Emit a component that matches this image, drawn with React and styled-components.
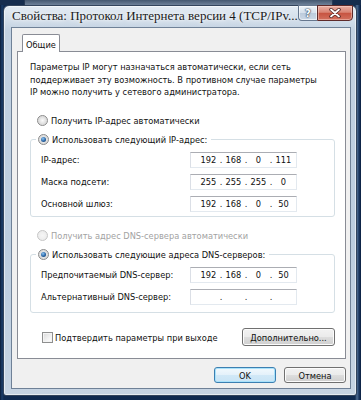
import React from 'react'
import styled, { createGlobalStyle } from 'styled-components'

const UI_FONT = `"DejaVu Sans Condensed", "DejaVu Sans", "Liberation Sans", sans-serif`

const GlobalStyle = createGlobalStyle`
  html, body {
    margin: 0;
    padding: 0;
    background: #0d2547;
  }
  * {
    box-sizing: border-box;
  }
`

const Desktop = styled.div`
  width: 361px;
  height: 400px;
  overflow: hidden;
  display: flex;
  flex-direction: column;
  background: linear-gradient(90deg, #0a1c38 0, #1b3d69 2px, #0f2a50 4px, #0f2a50 355px, #4f6d92 357px, #1b3862 359px, #0a1e3e 361px);
`

const BehindStrip = styled.div`
  height: 5px;
  flex-shrink: 0;
  display: flex;
  padding: 0 28px 0 24px;
  background: #162d4e;
`

const BehindWindow = styled.div`
  flex: 1;
  background: linear-gradient(180deg, #44576f, #6e8199);
  border-left: 1px solid #273a55;
  border-right: 1px solid #273a55;
`

const Window = styled.div`
  height: 391px;
  flex-shrink: 0;
  margin: 0 4px 0 3px;
  display: flex;
  flex-direction: column;
  padding: 0 5px 6px 7px;
  border: 1px solid #33445c;
  border-radius: 6px 6px 3px 3px;
  background: linear-gradient(180deg, #e3ebf3 0, #d2deea 14px, #c3d2e2 24px, #bccddf 60%, #c6d4e3 100%);
  box-shadow: inset 0 0 0 1px rgba(255, 255, 255, 0.55);
`

const TitleBar = styled.div`
  height: 21px;
  flex-shrink: 0;
  display: flex;
  align-items: flex-start;
  justify-content: space-between;
`

const Title = styled.div`
  padding-left: 1px;
  font-family: "Liberation Serif", serif;
  font-size: 13px;
  line-height: 20px;
  color: #1a1a1a;
  white-space: nowrap;
  text-shadow: 0 0 6px rgba(255, 255, 255, 0.95), 0 0 3px rgba(255, 255, 255, 0.9);
`

const CaptionButtons = styled.div`
  display: flex;
  margin: -1px -2px 0 0;
  height: 16px;
`

const HelpButton = styled.div`
  width: 19px;
  height: 16px;
  display: flex;
  align-items: center;
  justify-content: center;
  border: 1px solid #66778e;
  border-right: none;
  border-radius: 0 0 0 4px;
  background: linear-gradient(180deg, #eef3f8 0%, #d6e1ec 48%, #bccbdc 52%, #cbd8e6 100%);
  box-shadow: inset 0 0 0 1px rgba(255, 255, 255, 0.6);
  font-family: "DejaVu Sans", sans-serif;
  font-weight: bold;
  font-size: 10px;
  color: #fff;
  text-shadow: 0 0 1px #3c4d63, 0 0 1px #3c4d63, 0 0 2px #3c4d63;
`

const CloseButton = styled.div`
  width: 36px;
  height: 16px;
  display: flex;
  align-items: center;
  justify-content: center;
  border: 1px solid #5e2a2a;
  border-radius: 0 0 4px 0;
  background: linear-gradient(180deg, #eab0a4 0%, #d98373 45%, #c75441 52%, #d2705e 100%);
  box-shadow: inset 0 0 0 1px rgba(255, 220, 210, 0.45);
`

const Client = styled.div`
  flex: 1;
  display: flex;
  flex-direction: column;
  padding: 6px 4px 5px 5px;
  background: #f0f0f0;
  border: 1px solid #6f8197;
  font-family: ${UI_FONT};
  font-stretch: condensed;
  font-size: 9.2px;
  color: #111;
`

const Tabs = styled.div`
  display: flex;
  padding-left: 5px;
  height: 18px;
  flex-shrink: 0;
`

const Tab = styled.div`
  position: relative;
  z-index: 1;
  width: 38px;
  height: 18px;
  padding: 4px 0 0 3px;
  background: #fff;
  border: 1px solid #898c95;
  border-bottom: none;
  border-radius: 2px 2px 0 0;
`

const Panel = styled.div`
  flex: 1;
  margin-top: -1px;
  display: flex;
  flex-direction: column;
  padding: 9px 10px 12px 12px;
  background: #fff;
  border: 1px solid #898c95;
`

const Intro = styled.p`
  margin: 0;
  line-height: 12.5px;
`

const OptionRow = styled.div`
  display: flex;
  align-items: center;
  gap: 3px;
  height: 14px;
  margin-top: ${({ $top }) => $top}px;
  padding-left: 7px;
  color: ${({ $disabled }) => ($disabled ? '#a2a2a2' : 'inherit')};
  white-space: nowrap;
`

const RadioCircle = styled.span`
  position: relative;
  width: 11px;
  height: 11px;
  flex-shrink: 0;
  border-radius: 50%;
  border: 1px solid ${({ $disabled }) => ($disabled ? '#c6c6c6' : '#8a8a8a')};
  background: ${({ $disabled }) =>
    $disabled
      ? 'radial-gradient(circle at 50% 50%, #f6f6f6 0, #ececec 70%, #f4f4f4 100%)'
      : 'radial-gradient(circle at 50% 50%, #fafafa 0, #dcdcdc 60%, #f0f0f0 100%)'};

  &::after {
    content: '';
    display: ${({ $checked }) => ($checked ? 'block' : 'none')};
    position: absolute;
    left: 2px;
    top: 2px;
    width: 5px;
    height: 5px;
    border-radius: 50%;
    background: radial-gradient(circle at 40% 35%, #8cc4f2 0, #2a66a6 55%, #0e2f58 100%);
  }
`

const CheckBox = styled.span`
  width: 11px;
  height: 11px;
  flex-shrink: 0;
  border: 1px solid #8e8f8f;
  background: linear-gradient(135deg, #d9d9d9 0%, #f2f2f2 60%, #ffffff 100%);
  box-shadow: inset 0 0 0 1px #f4f4f4;
`

const Group = styled.fieldset`
  margin: 5px 0 0;
  padding: 0;
  min-width: 0;
  border: 1px solid #d5dfe5;
  border-radius: 3px;
`

const Legend = styled.legend`
  display: flex;
  align-items: center;
  gap: 3px;
  height: 14px;
  margin-left: 5px;
  padding: 0 4px 0 2px;
  white-space: nowrap;
`

const GroupBody = styled.div`
  display: flex;
  flex-direction: column;
  gap: 6px;
  padding: 5px 0 ${({ $bottom }) => $bottom}px 10px;
`

const FieldRow = styled.div`
  display: grid;
  grid-template-columns: 149px 107px;
  align-items: center;
  height: 16px;
`

const IpBox = styled.div`
  height: 16px;
  display: flex;
  align-items: center;
  padding-left: 7px;
  background: #fff;
  border: 1px solid #abadb3;
  border-left-color: #dbdfe6;
  border-right-color: #e3e9ef;
  border-bottom-color: #e3e9ef;
`

const Octet = styled.span`
  min-width: 21px;
  text-align: center;
`

const Dot = styled.span`
  width: 4px;
  text-align: center;
`

const BottomRow = styled.div`
  margin-top: auto;
  display: flex;
  align-items: center;
  justify-content: space-between;
`

const CheckRow = styled.label`
  display: flex;
  align-items: center;
  gap: 2px;
  padding-left: 12px;
  white-space: nowrap;
`

const Button = styled.button`
  width: ${({ $w }) => $w}px;
  height: ${({ $h }) => $h}px;
  padding: 0;
  font: inherit;
  font-stretch: condensed;
  color: #111;
  border-radius: 3px;
  border: 1px solid ${({ $default }) => ($default ? '#3c7fb1' : '#707070')};
  background: ${({ $default }) =>
    $default
      ? 'linear-gradient(180deg, #f2f9fd 0%, #e4f1fa 48%, #d1e8f7 52%, #c9e4f5 100%)'
      : 'linear-gradient(180deg, #f2f2f2 0%, #ebebeb 48%, #dddddd 52%, #cfcfcf 100%)'};
  box-shadow: inset 0 0 0 1px ${({ $default }) => ($default ? '#a8e2fb' : '#fcfcfc')};
`

const Footer = styled.div`
  display: flex;
  justify-content: flex-end;
  gap: 8px;
  margin-top: 8px;
  flex-shrink: 0;
`

function IpField({ octets }) {
  return (
    <IpBox>
      {octets.map((o, i) => (
        <React.Fragment key={i}>
          {i > 0 && <Dot>.</Dot>}
          <Octet>{o}</Octet>
        </React.Fragment>
      ))}
    </IpBox>
  )
}

const ipRows = [
  { label: 'IP-адрес:', value: ['192', '168', '0', '111'] },
  { label: 'Маска подсети:', value: ['255', '255', '255', '0'] },
  { label: 'Основной шлюз:', value: ['192', '168', '0', '50'] },
]

const dnsRows = [
  { label: 'Предпочитаемый DNS-сервер:', value: ['192', '168', '0', '50'] },
  { label: 'Альтернативный DNS-сервер:', value: ['', '', '', ''] },
]

export default function App() {
  return (
    <>
      <GlobalStyle />
      <Desktop>
        <BehindStrip>
          <BehindWindow />
        </BehindStrip>
        <Window>
          <TitleBar>
            <Title>Свойства: Протокол Интернета версии 4 (TCP/IPv...</Title>
            <CaptionButtons>
              <HelpButton>?</HelpButton>
              <CloseButton>
                <svg width="12" height="10" viewBox="0 0 12 10">
                  <path d="M2 1.5 L10 8.5 M10 1.5 L2 8.5" stroke="#4a2020" strokeWidth="3.4" strokeLinecap="round" />
                  <path d="M2 1.5 L10 8.5 M10 1.5 L2 8.5" stroke="#ffffff" strokeWidth="1.8" strokeLinecap="round" />
                </svg>
              </CloseButton>
            </CaptionButtons>
          </TitleBar>

          <Client>
            <Tabs>
              <Tab>Общие</Tab>
            </Tabs>

            <Panel>
              <Intro>
                Параметры IP могут назначаться автоматически, если сеть
                <br />
                поддерживает эту возможность. В противном случае параметры
                <br />
                IP можно получить у сетевого администратора.
              </Intro>

              <OptionRow $top={15}>
                <RadioCircle />
                Получить IP-адрес автоматически
              </OptionRow>

              <Group>
                <Legend>
                  <RadioCircle $checked />
                  Использовать следующий IP-адрес:
                </Legend>
                <GroupBody $bottom={4}>
                  {ipRows.map((r) => (
                    <FieldRow key={r.label}>
                      <span>{r.label}</span>
                      <IpField octets={r.value} />
                    </FieldRow>
                  ))}
                </GroupBody>
              </Group>

              <OptionRow $top={12} $disabled>
                <RadioCircle $disabled />
                Получить адрес DNS-сервера автоматически
              </OptionRow>

              <Group>
                <Legend>
                  <RadioCircle $checked />
                  Использовать следующие адреса DNS-серверов:
                </Legend>
                <GroupBody $bottom={7}>
                  {dnsRows.map((r) => (
                    <FieldRow key={r.label}>
                      <span>{r.label}</span>
                      <IpField octets={r.value} />
                    </FieldRow>
                  ))}
                </GroupBody>
              </Group>

              <BottomRow>
                <CheckRow>
                  <CheckBox />
                  Подтвердить параметры при выходе
                </CheckRow>
                <Button $w={93} $h={18}>Дополнительно...</Button>
              </BottomRow>
            </Panel>

            <Footer>
              <Button $w={62} $h={16} $default>OK</Button>
              <Button $w={62} $h={16}>Отмена</Button>
            </Footer>
          </Client>
        </Window>
      </Desktop>
    </>
  )
}
